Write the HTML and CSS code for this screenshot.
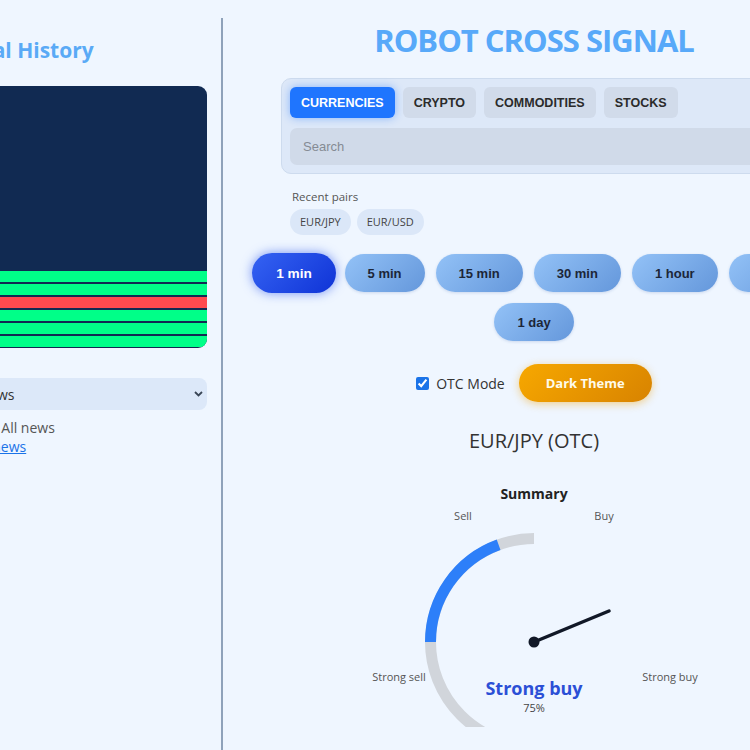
FILE: index.html
```html
<!DOCTYPE html>
<html lang="en">
<head>
<meta charset="utf-8">
<title>Robot Cross Signal</title>
<link rel="stylesheet" href="styles.css">
</head>
<body>
<div class="page">
  <aside class="left">
    <h2 class="left-title">Signal History</h2>
    <div class="chart">
      <div class="bars">
        <div class="bar win"></div>
        <div class="bar win"></div>
        <div class="bar loss"></div>
        <div class="bar win"></div>
        <div class="bar win"></div>
        <div class="bar win"></div>
      </div>
    </div>
    <div class="select">
      <span>All news</span>
      <svg class="chev" width="9" height="6" viewBox="0 0 9 6"><path d="M1 1 L4.5 4.5 L8 1" fill="none" stroke="#3a4656" stroke-width="1.8"/></svg>
    </div>
    <p class="news-line">Source: All news</p>
    <a class="news-link" href="#">Latest news</a>
  </aside>

  <main class="right">
    <h1 class="brand">ROBOT CROSS SIGNAL</h1>

    <section class="market">
      <div class="tabs">
        <button class="tab active">CURRENCIES</button>
        <button class="tab">CRYPTO</button>
        <button class="tab">COMMODITIES</button>
        <button class="tab">STOCKS</button>
      </div>
      <div class="search">Search</div>
    </section>

    <section class="recent">
      <div class="recent-label">Recent pairs</div>
      <div class="chips">
        <span class="chip">EUR/JPY</span>
        <span class="chip">EUR/USD</span>
      </div>
    </section>

    <div class="times">
      <button class="time active">1 min</button>
      <button class="time">5 min</button>
      <button class="time">15 min</button>
      <button class="time">30 min</button>
      <button class="time">1 hour</button>
      <button class="time">4 hour</button>
      <button class="time">1 day</button>
    </div>

    <div class="options">
      <label class="otc"><input type="checkbox" checked> OTC Mode</label>
      <button class="theme">Dark Theme</button>
    </div>

    <h2 class="pair">EUR/JPY (OTC)</h2>

    <div class="gauge">
      <svg class="gauge-svg" width="340" height="243" viewBox="0 0 340 243">
        <path d="M170 54.5 A103.5 103.5 0 0 0 170 261.5" fill="none" stroke="#d1d5db" stroke-width="11"/>
        <path d="M134.6 60.74 A103.5 103.5 0 0 0 66.5 158" fill="none" stroke="#2d7ff9" stroke-width="11"/>
        <line x1="170" y1="158" x2="245" y2="127" stroke="#111827" stroke-width="3.5" stroke-linecap="round"/>
        <circle cx="170" cy="158" r="5.5" fill="#111827"/>
      </svg>
      <span class="g-label g-title">Summary</span>
      <span class="g-label g-sell">Sell</span>
      <span class="g-label g-buy">Buy</span>
      <span class="g-label g-ssell">Strong sell</span>
      <span class="g-label g-sbuy">Strong buy</span>
      <span class="g-label g-result">Strong buy</span>
      <span class="g-label g-pct">75%</span>
    </div>
  </main>
</div>
</body>
</html>
```

FILE: styles.css
```css
* { box-sizing: border-box; }

html, body {
  margin: 0;
  padding: 0;
  background: #eff6ff;
  overflow: hidden;
  width: 750px;
  height: 750px;
}

body {
  font-family: "Open Sans", "Noto Sans", sans-serif;
  color: #333;
}

.page {
  display: flex;
  align-items: stretch;
  margin: 18px 0 0 -65px;
  width: 910px;
  min-height: 760px;
}

/* ---------- left column ---------- */
.left {
  flex: 0 0 288px;
  padding: 0 14px;
  border-right: 2px solid #8fa2ba;
}

.left-title {
  margin: 17px 0 0;
  font-size: 21px;
  line-height: 30px;
  font-weight: 700;
  color: #5aaaf6;
}

.chart {
  margin-top: 21px;
  height: 262px;
  background: #112a52;
  border-radius: 9px;
  overflow: hidden;
  display: flex;
  flex-direction: column;
  justify-content: flex-end;
  padding-bottom: 1px;
}

.bars {
  display: flex;
  flex-direction: column;
  gap: 2px;
}

.bar { height: 11px; }
.bar.win { background: #00ff88; }
.bar.loss { background: #ff4a4f; }

.select {
  margin-top: 30px;
  height: 32px;
  background: #dce8f9;
  border-radius: 8px;
  display: flex;
  align-items: center;
  justify-content: space-between;
  padding: 0 4px 0 12px;
  font-size: 14px;
  color: #333;
}

.news-line {
  margin: 8px 0 0;
  font-size: 14px;
  line-height: 19px;
  color: #555;
}

.news-link {
  display: block;
  font-size: 14px;
  line-height: 19px;
  color: #1a73e8;
  text-decoration: underline;
}

/* ---------- right column ---------- */
.right {
  flex: 0 0 622px;
  padding: 0 11px;
  display: flex;
  flex-direction: column;
  align-items: center;
}

.brand {
  margin: 2px 0 0;
  font-size: 31px;
  line-height: 40px;
  font-weight: 700;
  letter-spacing: -1px;
  color: #58a9f9;
}

.market {
  margin-top: 18px;
  width: 506px;
  background: #dde8f8;
  border: 1px solid #cddbee;
  border-radius: 10px;
  padding: 8px;
  display: flex;
  flex-direction: column;
  gap: 10px;
}

.tabs {
  display: flex;
  gap: 8px;
}

button {
  font: inherit;
  border: 0;
  margin: 0;
  cursor: pointer;
}

.tab {
  height: 31px;
  padding: 0 11px;
  border-radius: 6px;
  background: #d1dbea;
  color: #2b2b2b;
  font-family: "Liberation Sans", Arial, sans-serif;
  font-weight: 700;
  font-size: 12.5px;
}

.tab.active {
  background: #1f75fe;
  color: #fff;
  box-shadow: 0 0 8px rgba(31, 117, 254, 0.45);
}

.search {
  height: 37px;
  border-radius: 7px;
  background: #d0dae9;
  padding-left: 13px;
  display: flex;
  align-items: center;
  font-family: "Liberation Sans", Arial, sans-serif;
  font-size: 13px;
  color: #858b94;
}

.recent {
  margin-top: 15px;
  width: 506px;
  padding: 0 9px;
}

.recent-label {
  padding-left: 2px;
  font-size: 11.5px;
  line-height: 16px;
  color: #555;
}

.chips {
  margin-top: 4px;
  display: flex;
  gap: 6px;
}

.chip {
  height: 26px;
  padding: 0 10px;
  border-radius: 13px;
  background: #dbe7f8;
  font-size: 11px;
  line-height: 26px;
  color: #444;
}

.times {
  margin-top: 19px;
  width: 600px;
  display: flex;
  flex-wrap: wrap;
  justify-content: center;
  gap: 11px;
}

.time {
  height: 38px;
  padding: 0 23px;
  border-radius: 19px;
  background: linear-gradient(135deg, #93c2f7 0%, #6497db 100%);
  color: #1c2638;
  font-family: "Liberation Sans", Arial, sans-serif;
  font-weight: 700;
  font-size: 13px;
  box-shadow: 0 1px 3px rgba(60, 100, 170, 0.2);
}

.time.active {
  background: linear-gradient(135deg, #3563f3 0%, #0f33d6 100%);
  color: #fff;
  transform: scale(1.05);
  box-shadow: 0 0 10px rgba(37, 80, 235, 0.6);
}

.options {
  margin-top: 23px;
  display: flex;
  align-items: center;
  gap: 14px;
}

.otc {
  display: flex;
  align-items: center;
  gap: 7px;
  font-size: 14px;
  color: #333;
}

.otc input {
  margin: 0;
  width: 13px;
  height: 13px;
  accent-color: #1a73e8;
}

.theme {
  height: 38px;
  padding: 0 27px;
  border-radius: 19px;
  background: linear-gradient(135deg, #f7a800 0%, #d88300 100%);
  color: #fffbea;
  font-weight: 700;
  font-size: 13px;
  box-shadow: 0 2px 8px rgba(240, 160, 0, 0.45);
}

.pair {
  margin: 25px 0 0;
  font-size: 20px;
  line-height: 28px;
  font-weight: 400;
  color: #333;
}

.gauge {
  position: relative;
  margin-top: 29px;
  width: 340px;
  height: 243px;
}

.gauge-svg {
  display: block;
  overflow: hidden;
}

.g-label {
  position: absolute;
  transform: translate(-50%, -50%);
  white-space: nowrap;
  font-size: 11px;
  line-height: 14px;
  color: #555;
}

.g-title { left: 170px; top: 10px; font-size: 14px; line-height: 18px; font-weight: 700; color: #222; }
.g-sell { left: 99px; top: 32px; }
.g-buy { left: 240px; top: 32px; }
.g-ssell { left: 35px; top: 193px; }
.g-sbuy { left: 306px; top: 193px; }
.g-result { left: 170px; top: 204px; font-size: 18px; line-height: 24px; font-weight: 700; color: #2b4fd6; }
.g-pct { left: 170px; top: 224px; color: #444; }
```
